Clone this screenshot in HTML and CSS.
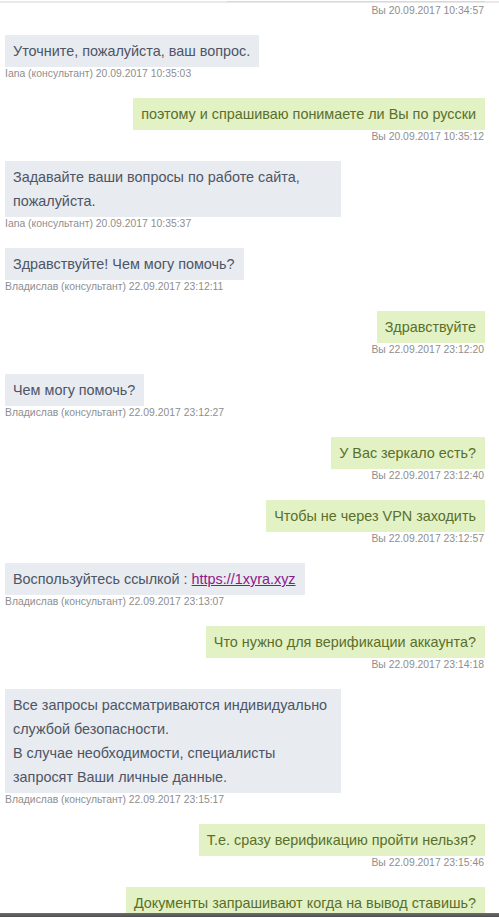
FILE: index.html
```html
<!DOCTYPE html>
<html lang="ru">
<head>
<meta charset="utf-8">
<link rel="stylesheet" href="styles.css">
</head>
<body>
<div class="chat">
  <div class="msg out first">
    <div class="sliver"></div>
    <div class="meta">Вы 20.09.2017 10:34:57</div>
  </div>
  <div class="msg in">
    <div class="bubble">Уточните, пожалуйста, ваш вопрос.</div>
    <div class="meta">Iana (консультант) 20.09.2017 10:35:03</div>
  </div>
  <div class="msg out">
    <div class="bubble">поэтому и спрашиваю понимаете ли Вы по русски</div>
    <div class="meta">Вы 20.09.2017 10:35:12</div>
  </div>
  <div class="msg in">
    <div class="bubble">Задавайте ваши вопросы по работе сайта, пожалуйста.</div>
    <div class="meta">Iana (консультант) 20.09.2017 10:35:37</div>
  </div>
  <div class="msg in">
    <div class="bubble">Здравствуйте! Чем могу помочь?</div>
    <div class="meta">Владислав (консультант) 22.09.2017 23:12:11</div>
  </div>
  <div class="msg out">
    <div class="bubble">Здравствуйте</div>
    <div class="meta">Вы 22.09.2017 23:12:20</div>
  </div>
  <div class="msg in">
    <div class="bubble">Чем могу помочь?</div>
    <div class="meta">Владислав (консультант) 22.09.2017 23:12:27</div>
  </div>
  <div class="msg out">
    <div class="bubble">У Вас зеркало есть?</div>
    <div class="meta">Вы 22.09.2017 23:12:40</div>
  </div>
  <div class="msg out">
    <div class="bubble">Чтобы не через VPN заходить</div>
    <div class="meta">Вы 22.09.2017 23:12:57</div>
  </div>
  <div class="msg in">
    <div class="bubble">Воспользуйтесь ссылкой : <a class="link" href="#">https://1xyra.xyz</a></div>
    <div class="meta">Владислав (консультант) 22.09.2017 23:13:07</div>
  </div>
  <div class="msg out">
    <div class="bubble">Что нужно для верификации аккаунта?</div>
    <div class="meta">Вы 22.09.2017 23:14:18</div>
  </div>
  <div class="msg in">
    <div class="bubble">Все запросы рассматриваются индивидуально службой безопасности.<br>В случае необходимости, специалисты запросят Ваши личные данные.</div>
    <div class="meta">Владислав (консультант) 22.09.2017 23:15:17</div>
  </div>
  <div class="msg out">
    <div class="bubble">Т.е. сразу верификацию пройти нельзя?</div>
    <div class="meta">Вы 22.09.2017 23:15:46</div>
  </div>
  <div class="msg out last">
    <div class="bubble">Документы запрашивают когда на вывод ставишь?</div>
  </div>
</div>
<div class="bottombar"></div>
</body>
</html>
```

FILE: styles.css
```css
html, body {
  margin: 0;
  padding: 0;
  background: #ffffff;
  height: 917px;
  overflow: hidden;
}
body {
  font-family: "Liberation Sans", Arial, sans-serif;
  position: relative;
}
.chat {
  border-top: 2px solid #e9e9e9;
  margin-top: 1px;
  padding: 0 14px 0 5px;
  display: flex;
  flex-direction: column;
}
.msg {
  display: flex;
  flex-direction: column;
  margin-bottom: 17px;
}
.msg.in { align-items: flex-start; }
.msg.out { align-items: flex-end; }
.sliver {
  width: 258px;
  height: 1px;
  margin-top: -2px;
  background: #cfe5a9;
}
.first .meta { margin-top: 2px; }
.bubble {
  max-width: 336px;
  box-sizing: border-box;
  padding: 4px 9px 4px 8px;
  font-size: 14.4px;
  line-height: 24px;
}
.in .bubble {
  background: #e8ebef;
  color: #4d5566;
}
.out .bubble {
  background: #e2f2c5;
  color: #5b6f2a;
  max-width: none;
}
.link {
  color: #8b1a8b;
  text-decoration: underline;
}
.meta {
  font-size: 10.4px;
  line-height: 14px;
  color: #8e8e8e;
}
.out .meta { margin-right: 1px; }
.bottombar {
  position: absolute;
  left: 0;
  right: 0;
  top: 913px;
  height: 4px;
  background: linear-gradient(to bottom, #6e6e6e, #4f4f4f);
}
```
